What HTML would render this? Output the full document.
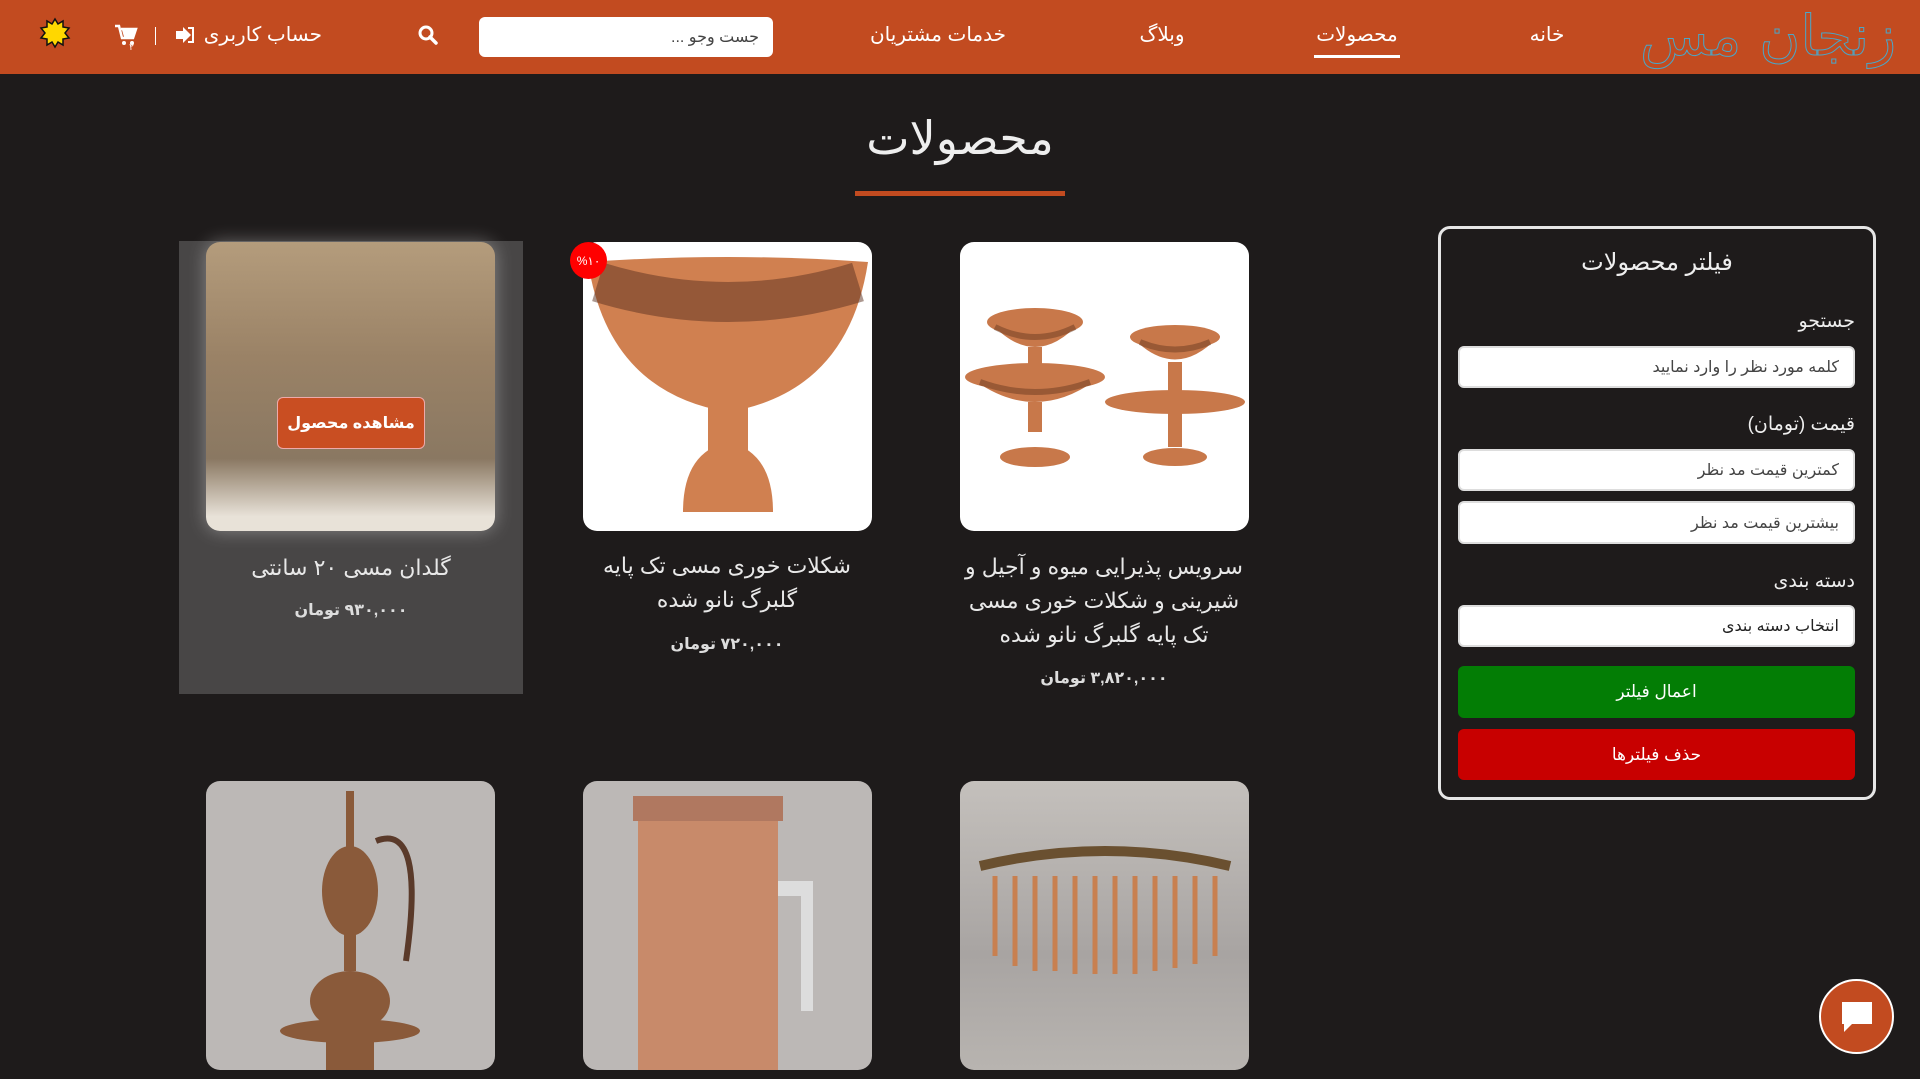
<!DOCTYPE html>
<html lang="fa" dir="rtl"><head><meta charset="utf-8">
<style>
*{margin:0;padding:0;box-sizing:border-box}
body{width:1920px;height:1079px;overflow:hidden;background:#1e1b1b;font-family:"Liberation Sans","DejaVu Sans",sans-serif;color:#e6e6e6;position:relative}
.a{position:absolute}
.hdr{left:0;top:0;width:1920px;height:74px;background:#c24b20}
.nav{color:#fff;font-size:20px;top:22px;white-space:nowrap;transform:translateX(50%)}
.inp{background:#fff;border:2px solid #ddd;border-radius:6px;color:#444;font-size:16px;padding:0 14px;display:flex;align-items:center;justify-content:flex-start}
.lbl{font-size:19px;color:#eee;right:65px}
.pimg{border-radius:14px;overflow:hidden;width:289px;height:289px}
.t{font-size:22px;color:#e8e8e8;text-align:center;line-height:34px;width:300px;transform:translateX(-50%)}
.pr{font-size:16px;font-weight:bold;color:#ddd;text-align:center;width:200px;transform:translateX(-50%)}
</style></head><body>
<div class="a hdr"></div>
<div class="a" style="left:1640px;top:4px;font-family:'DejaVu Sans',sans-serif;font-size:56px;color:transparent;-webkit-text-stroke:1px #4aa6c8;white-space:nowrap;direction:rtl">زنجان مس</div>
<div class="a nav" style="right:373px">خانه</div>
<div class="a nav" style="right:563px">محصولات</div>
<div class="a" style="left:1314px;top:55px;width:86px;height:3px;background:#fff"></div>
<div class="a nav" style="right:758px">وبلاگ</div>
<div class="a nav" style="right:982px">خدمات مشتریان</div>
<div class="a inp" style="left:479px;top:17px;width:294px;height:40px;border:none;font-size:16px">جست وجو ...</div>
<svg class="a" style="left:417px;top:24px" width="22" height="22" viewBox="0 0 22 22"><circle cx="9" cy="9" r="6" fill="none" stroke="#fff" stroke-width="3"/><path d="M13 13l6 6" stroke="#fff" stroke-width="3.5" stroke-linecap="round"/></svg>
<div class="a" style="right:1598px;top:22px;font-size:20px;color:#fff;white-space:nowrap">حساب کاربری</div>
<svg class="a" style="left:175px;top:26px" width="20" height="18" viewBox="0 0 20 18"><path d="M1 5h7V1l8 8-8 8v-4H1z" fill="#fff"/><path d="M13 2h5v14h-5" fill="none" stroke="#fff" stroke-width="2"/></svg>
<div class="a" style="left:155px;top:27px;width:1px;height:18px;background:#fff"></div>
<svg class="a" style="left:114px;top:24px" width="26" height="26" viewBox="0 0 26 26"><path d="M1 2h4l3 12h11l3-9H7" fill="none" stroke="#fff" stroke-width="2.5"/><path d="M8 6h13l-2 7H10z" fill="#fff"/><circle cx="10" cy="19" r="2" fill="#fff"/><circle cx="18" cy="19" r="2" fill="#fff"/><text x="20" y="26" font-size="9" fill="#fff">۲</text></svg>
<svg class="a" style="left:39px;top:17px" width="32" height="32" viewBox="-16 -16 32 32"><polygon points="0,-14 3,-9 8,-12 8,-6 14,-5 10,0 14,5 8,6 8,12 3,9 0,14 -3,9 -8,12 -8,6 -14,5 -10,0 -14,-5 -8,-6 -8,-12 -3,-9" fill="#ffd700" stroke="#111" stroke-width="1.5"/></svg>

<div class="a" style="left:0;width:1920px;top:111px;text-align:center;font-size:46px;color:#eee">محصولات</div>
<div class="a" style="left:855px;top:191px;width:210px;height:5px;background:#c24b20"></div>

<div class="a" style="left:1438px;top:226px;width:438px;height:574px;border:3px solid #e6e6e6;border-radius:12px"></div>
<div class="a" style="left:1438px;width:438px;top:248px;text-align:center;font-size:24px;color:#eee">فیلتر محصولات</div>
<div class="a lbl" style="top:310px">جستجو</div>
<div class="a inp" style="left:1458px;top:346px;width:397px;height:42px">کلمه مورد نظر را وارد نمایید</div>
<div class="a lbl" style="top:413px">قیمت (تومان)</div>
<div class="a inp" style="left:1458px;top:449px;width:397px;height:42px">کمترین قیمت مد نظر</div>
<div class="a inp" style="left:1458px;top:501px;width:397px;height:43px">بیشترین قیمت مد نظر</div>
<div class="a lbl" style="top:570px">دسته بندی</div>
<div class="a inp" style="left:1458px;top:605px;width:397px;height:42px;color:#222">انتخاب دسته بندی</div>
<div class="a" style="left:1458px;top:666px;width:397px;height:52px;background:#037d05;border-radius:6px;color:#fff;font-size:17px;display:flex;align-items:center;justify-content:center">اعمال فیلتر</div>
<div class="a" style="left:1458px;top:729px;width:397px;height:51px;background:#c80000;border-radius:6px;color:#fff;font-size:17px;display:flex;align-items:center;justify-content:center">حذف فیلترها</div>

<div class="a pimg" style="left:960px;top:242px;background:#fff">
<svg width="289" height="289"><g fill="#c8784a"><ellipse cx="75" cy="80" rx="48" ry="14"/><path d="M30 80q45 50 90 0z"/><rect x="68" y="105" width="14" height="30"/><ellipse cx="75" cy="135" rx="70" ry="14"/><path d="M10 135q65 50 130 0z"/><rect x="68" y="160" width="14" height="30"/><ellipse cx="75" cy="215" rx="35" ry="10"/><ellipse cx="215" cy="95" rx="45" ry="12"/><path d="M172 95q43 45 86 0z"/><rect x="208" y="120" width="14" height="30"/><ellipse cx="215" cy="160" rx="70" ry="12"/><rect x="208" y="165" width="14" height="40"/><ellipse cx="215" cy="215" rx="32" ry="9"/></g><g stroke="#6a3a20" stroke-width="6" opacity=".5" fill="none"><path d="M35 85q40 20 80 0M20 140q55 20 110 0M180 100q35 15 70 0"/></g></svg></div>
<div class="a t" style="left:1104px;top:550px;width:290px">سرویس پذیرایی میوه و آجیل و شیرینی و شکلات خوری مسی تک پایه گلبرگ نانو شده</div>
<div class="a pr" style="left:1104px;top:668px">۳,۸۲۰,۰۰۰ تومان</div>

<div class="a pimg" style="left:583px;top:242px;background:#fff">
<svg width="289" height="289"><g fill="#d08050"><path d="M5 20q140 -10 280 0q-20 130 -140 150q-120 -20 -140 -150z"/><rect x="125" y="165" width="40" height="50"/><path d="M100 270q0 -60 45 -70q45 10 45 70z"/></g><path d="M15 40q130 40 260 0" stroke="#5a3020" stroke-width="40" fill="none" opacity=".5"/></svg></div>
<div class="a" style="left:570px;top:242px;width:37px;height:37px;border-radius:50%;background:#f00;color:#fff;font-size:12px;display:flex;align-items:center;justify-content:center">%۱۰</div>
<div class="a t" style="left:727px;top:549px;width:280px">شکلات خوری مسی تک پایه گلبرگ نانو شده</div>
<div class="a pr" style="left:727px;top:634px">۷۲۰,۰۰۰ تومان</div>

<div class="a" style="left:179px;top:241px;width:344px;height:453px;background:#484646"></div>
<div class="a pimg" style="left:206px;top:242px;background:linear-gradient(180deg,#b49c7c 0%,#9a8266 40%,#8a7862 75%,#e8e2d8 95%);box-shadow:0 0 18px rgba(255,255,255,.35)"></div>
<div class="a" style="left:277px;top:397px;width:148px;height:52px;background:#c94e22;border:1px solid #eaa;border-radius:6px;color:#fff;font-size:16px;font-weight:bold;display:flex;align-items:center;justify-content:center">مشاهده محصول</div>
<div class="a t" style="left:351px;top:551px">گلدان مسی ۲۰ سانتی</div>
<div class="a pr" style="left:351px;top:600px">۹۳۰,۰۰۰ تومان</div>

<div class="a pimg" style="left:960px;top:781px;background:linear-gradient(180deg,#c4c0bc,#a8a4a2 60%,#b8b4b0)">
<svg width="289" height="289"><path d="M20 85q125 -30 250 0" stroke="#6a5030" stroke-width="10" fill="none"/><g stroke="#c88050" stroke-width="5" fill="none"><path d="M35 95v80M55 95v90M75 95v95M95 95v95M115 95v98M135 95v98M155 95v98M175 95v98M195 95v95M215 95v92M235 95v88M255 95v80"/></g></svg></div>
<div class="a pimg" style="left:583px;top:781px;background:#bcb8b6">
<svg width="289" height="289"><rect x="55" y="30" width="140" height="259" fill="#c88a6a"/><rect x="50" y="15" width="150" height="25" fill="#b07860"/><path d="M195 100h35v130h-12v-115h-23z" fill="#ddd"/></svg></div>
<div class="a pimg" style="left:206px;top:781px;background:#bcb8b6">
<svg width="289" height="289"><g fill="#8a5a3a"><rect x="140" y="10" width="8" height="60"/><ellipse cx="144" cy="110" rx="28" ry="45"/><rect x="138" y="150" width="12" height="40"/><ellipse cx="144" cy="220" rx="40" ry="30"/><ellipse cx="144" cy="250" rx="70" ry="12"/><rect x="120" y="260" width="48" height="29"/></g><path d="M170 60q50 -20 30 120" stroke="#5a3a2a" stroke-width="6" fill="none"/></svg></div>

<div class="a" style="left:1819px;top:979px;width:75px;height:75px;border-radius:50%;background:#c24b20;border:2px solid #fff"></div>
<svg class="a" style="left:1838px;top:998px" width="38" height="38" viewBox="0 0 38 38"><path d="M4 4h30v22H14l-8 8v-8H4z" fill="#fff"/></svg>
</body></html>
